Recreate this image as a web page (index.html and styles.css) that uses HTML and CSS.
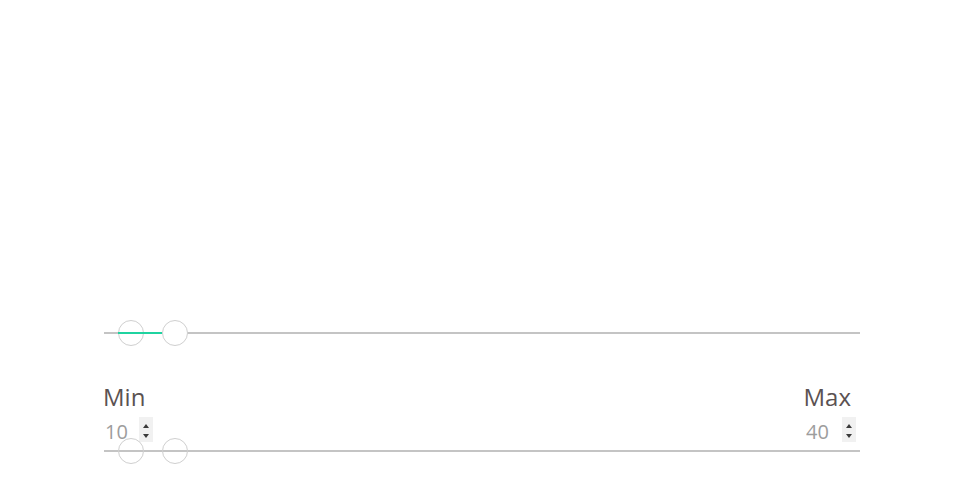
FILE: index.html
```html
<!DOCTYPE html>
<html>
<head>
<meta charset="utf-8">
<link rel="stylesheet" href="styles.css">
</head>
<body>
<div class="wrap">
  <div class="slider slider-top">
    <div class="track"></div>
    <div class="thumb thumb-clear" style="left:27px"></div>
    <div class="fill" style="left:14px;width:44px"></div>
    <div class="thumb" style="left:71px"></div>
  </div>
  <div class="fields">
    <div class="field field-min">
      <div class="label">Min</div>
      <div class="num-row">
        <input class="num" type="number" value="10">
        <span class="spin"><span class="up"></span><span class="down"></span></span>
      </div>
    </div>
    <div class="field field-max">
      <div class="label">Max</div>
      <div class="num-row">
        <input class="num num-max" type="number" value="40">
        <span class="spin"><span class="up"></span><span class="down"></span></span>
      </div>
    </div>
  </div>
  <div class="slider slider-bottom">
    <div class="track"></div>
    <div class="thumb thumb-clear" style="left:27px"></div>
    <div class="thumb thumb-clear" style="left:71px"></div>
  </div>
</div>
</body>
</html>
```
FILE: styles.css
```css
html, body {
  margin: 0;
  padding: 0;
  background: #fff;
  font-family: "Open Sans", "Noto Sans", sans-serif;
}
.wrap {
  margin: 0 100px 0 104px;
  padding-top: 320px;
}
.slider {
  position: relative;
  height: 26px;
}
.track {
  position: absolute;
  left: 0;
  right: 0;
  top: 12px;
  height: 2px;
  background: #c4c4c4;
}
.fill {
  position: absolute;
  top: 12px;
  height: 2px;
  background: #1fd3a0;
}
.thumb {
  position: absolute;
  top: 0;
  width: 26px;
  height: 26px;
  margin-left: -13px;
  box-sizing: border-box;
  border: 1px solid #cfcfcf;
  border-radius: 50%;
  background: #fff;
}
.thumb-clear {
  background: transparent;
}
.fields {
  display: flex;
  justify-content: space-between;
  margin-top: 36px;
}
.field {
  display: flex;
  flex-direction: column;
}
.field-min {
  align-items: flex-start;
}
.field-max {
  align-items: flex-end;
  padding-right: 4px;
}
.label {
  font-size: 24px;
  line-height: 30px;
  color: #5b5252;
  margin-left: -1px;
}
.field-max .label {
  margin-right: 5px;
}
.num-row {
  display: flex;
  align-items: flex-start;
  margin-top: 4px;
  height: 30px;
}
.num {
  width: 35px;
  height: 30px;
  box-sizing: border-box;
  border: none;
  background: transparent;
  padding: 0 0 0 1px;
  margin: 0;
  font-family: "Open Sans", "Noto Sans", sans-serif;
  font-size: 20px;
  color: #9d9d9d;
  outline: none;
  -moz-appearance: textfield;
}
.num-max {
  width: 36px;
  padding-left: 0;
}
.num::-webkit-inner-spin-button,
.num::-webkit-outer-spin-button {
  -webkit-appearance: none;
  margin: 0;
}
.spin {
  position: relative;
  width: 14px;
  height: 25px;
  margin-top: 1px;
  background: #f1f1f1;
}
.up, .down {
  position: absolute;
  left: 4px;
  width: 0;
  height: 0;
  border-left: 3.5px solid transparent;
  border-right: 3.5px solid transparent;
}
.up {
  top: 7px;
  border-bottom: 4px solid #3a3a3a;
}
.down {
  top: 17px;
  border-top: 4px solid #3a3a3a;
}
.slider-bottom {
  margin-top: -8px;
}
```
